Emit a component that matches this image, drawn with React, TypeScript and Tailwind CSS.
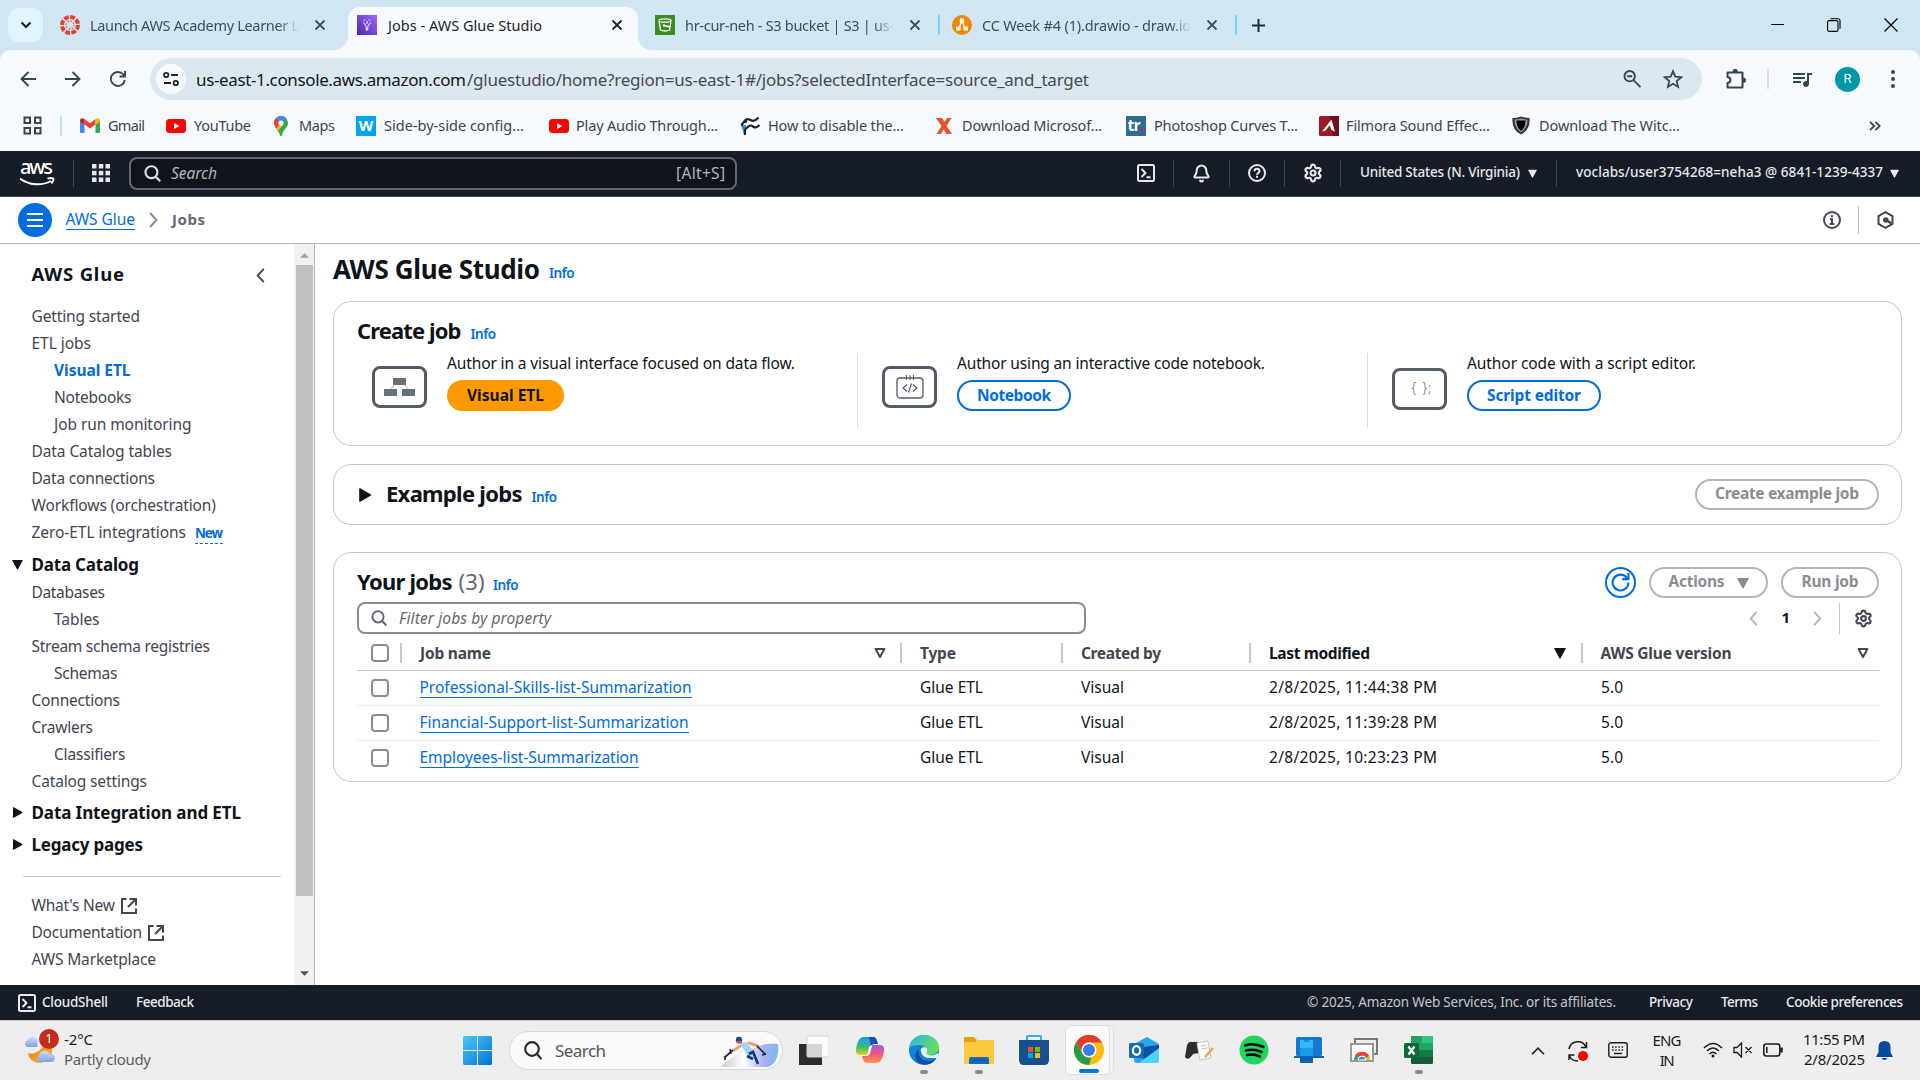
import React, { useLayoutEffect, useRef, useState } from 'react';
import { Settings, Bell } from 'lucide-react';
import { MdQueueMusic } from 'react-icons/md';

/** A single line of text, tracked so that it spans the given width. */
function T({ w, className = '', children }: { w: number; className?: string; children: string }) {
  const ref = useRef<HTMLSpanElement>(null);
  const [ls, setLs] = useState(0);
  useLayoutEffect(() => {
    const el = ref.current;
    if (!el) return;
    setLs((w - el.getBoundingClientRect().width) / Math.max(children.length - 1, 1));
  }, []);
  return (
    <span className={`block shrink-0 whitespace-nowrap ${className}`} style={{ width: w }}>
      <span ref={ref} style={{ letterSpacing: ls }}>{children}</span>
    </span>
  );
}

type P = { className?: string };

const Close = ({ className = '' }: P) => (
  <svg viewBox="0 0 12 12" className={`size-3 shrink-0 ${className}`} stroke="currentColor" strokeWidth="1.8" fill="none"><path d="M1.5 1.5l9 9M10.5 1.5l-9 9" /></svg>
);
const SearchIcon = ({ className = '' }: P) => (
  <svg viewBox="0 0 16 16" className={`shrink-0 ${className}`} stroke="currentColor" strokeWidth="2" fill="none"><circle cx="7" cy="6.8" r="5.6" /><path d="M11 11l4.3 4.3" /></svg>
);
const Terminal = ({ className = '' }: P) => (
  <svg viewBox="0 0 18 18" className={`size-[18px] shrink-0 ${className}`} stroke="currentColor" strokeWidth="2" fill="none" strokeLinejoin="round"><rect x="1" y="1" width="16" height="16" rx="1.5" /><path d="M4.5 5l4 4-4 4M9.5 13.2h4" /></svg>
);
const Down = ({ className = '' }: P) => (
  <svg viewBox="0 0 12 12" className={`shrink-0 ${className}`} fill="currentColor"><path d="M0.8 1h10.4q.9 0 .4.9L6.7 11q-.7 1-1.4 0L.4 1.9Q0 1 .8 1z" /></svg>
);
const Right = ({ className = '' }: P) => (
  <svg viewBox="0 0 12 12" className={`shrink-0 ${className}`} fill="currentColor"><path d="M1 0.8v10.4q0 .9.9.5l8.900-5q.9-.7 0-1.4L1.9.3Q1 0 1 .8z" /></svg>
);
const DownOutline = ({ className = '' }: P) => (
  <svg viewBox="0 0 12 12" className={`size-3 shrink-0 ${className}`} fill="none" stroke="#424650" strokeWidth="2" strokeLinejoin="round"><path d="M1.6 2h8.8L6 10z" /></svg>
);
const External = ({ className = '' }: P) => (
  <svg viewBox="0 0 16 16" className={`size-4 shrink-0 ${className}`} fill="none" stroke="#424650" strokeWidth="2"><path d="M5.5 1H1v14h14v-4.5M8.5 1H15v6.5M14.5 1.500L7 9" /></svg>
);
const Chevron = ({ className = '' }: P) => (
  <svg viewBox="0 0 9 16" className={`h-4 w-[9px] shrink-0 ${className}`} fill="none" stroke="currentColor" strokeWidth="2"><path d="M1 1l6.500 7L1 15" /></svg>
);
const YouTube = ({ className = '' }: P) => (
  <svg viewBox="0 0 20 14" className={`h-[14px] w-5 shrink-0 ${className}`}><rect width="20" height="14" rx="3.500" fill="#f00" /><path d="M8 4l5.500 3L8 10z" fill="#fff" /></svg>
);
const VRule = ({ className = '' }: P) => <i className={`h-[27px] w-px shrink-0 bg-[#424650] ${className}`} />;

const tabText = 'ml-[10px] pt-px text-[14.500px] [mask-image:linear-gradient(to_right,black_90%,transparent_100%)]';

function Tabs() {
  return (
    <div className="flex h-[50px] bg-[#f6fafe]">
      <div className="flex w-[348px] shrink-0 items-center rounded-br-[14px] bg-[#d1e6f3] text-[#3c4f5a]">
        <div className="ml-2 flex h-[34px] w-[35px] items-center justify-center rounded-[11px] bg-[#e1f4ff]">
          <svg viewBox="0 0 12 8" className="h-2 w-3" fill="none" stroke="#10181d" strokeWidth="2.200"><path d="M1.500 1.500L6 6l4.500-4.500" /></svg>
        </div>
        <svg viewBox="0 0 20 20" className="ml-[17px] size-5">
          <circle cx="10" cy="10" r="8" fill="none" stroke="#e83e2f" strokeWidth="4" strokeDasharray="4.700 1.583" />
          <circle cx="10" cy="10" r="4" fill="none" stroke="#e83e2f" strokeWidth="1.400" strokeDasharray="1.200 1.940" />
        </svg>
        <T w={209} className={tabText}>Launch AWS Academy Learner L</T>
        <Close className="ml-[15px]" />
      </div>
      <div className="w-[290px] shrink-0 bg-[#d1e6f3]">
        <div className="mt-[7px] flex h-[43px] items-center rounded-t-[12px] bg-[#f6fafe] pb-[7px] text-[#1c2529]">
          <svg viewBox="0 0 20 20" className="ml-[9px] size-5">
            <defs><linearGradient id="gl" x1="0" y1="1" x2="1" y2="0"><stop stopColor="#4d27aa" /><stop offset="1" stopColor="#a166ff" /></linearGradient></defs>
            <rect width="20" height="20" fill="url(#gl)" />
            <path d="M6.500 7.500l2.700 4V15h1.600v-3.500l2.700-4M8 4.500v1M12 4.500v1M10 6v3M6.500 5.500v.5M13.500 5.500v.5" stroke="#fff" strokeWidth="1" fill="none" />
          </svg>
          <T w={154} className="ml-[11px] pt-px text-[14.500px]">Jobs - AWS Glue Studio</T>
          <Close className="ml-[69px]" />
        </div>
      </div>
      <div className="flex min-w-0 flex-1 items-center rounded-bl-[14px] bg-[#d1e6f3] text-[#3c4f5a]">
        <svg viewBox="0 0 20 20" className="ml-[17px] size-5 shrink-0">
          <rect width="20" height="20" fill="#3c8c23" /><path d="M4 5.500l1.500 9.500q4.500 2 9 0L16 5.500" fill="none" stroke="#fff" strokeWidth="1.300" /><ellipse cx="10" cy="5.500" rx="6" ry="1.700" fill="none" stroke="#fff" strokeWidth="1.200" /><path d="M9 10.500l6 1.500" stroke="#fff" strokeWidth="1.300" /><circle cx="9" cy="10.500" r="1.200" fill="#fff" />
        </svg>
        <T w={209} className={tabText}>hr-cur-neh - S3 bucket | S3 | us-</T>
        <Close className="ml-[15px]" />
        <i className="ml-[17px] h-5 w-[2px] bg-[#7fd0fa]" />
        <svg viewBox="0 0 20 20" className="ml-3 size-5 shrink-0">
          <circle cx="10" cy="10" r="10" fill="#f08705" /><path d="M10 6l-3.500 8M10 6l3.500 8" stroke="#fff" strokeWidth="1.300" /><rect x="7.800" y="3.500" width="4.400" height="4.200" rx=".6" fill="#fff" /><rect x="4" y="11.500" width="4.600" height="4" rx=".6" fill="#fff" /><rect x="11.400" y="11.500" width="4.600" height="4" rx=".6" fill="#fff" />
        </svg>
        <T w={209} className={tabText}>CC Week #4 (1).drawio - draw.io</T>
        <Close className="ml-[15px]" />
        <i className="ml-[17px] h-5 w-[2px] bg-[#7fd0fa]" />
        <svg viewBox="0 0 13 13" className="ml-[15px] size-[13px] shrink-0" stroke="#1c2f38" strokeWidth="2"><path d="M6.500 0v13M0 6.500h13" /></svg>
        <div className="ml-auto flex items-center text-black">
          <i className="h-px w-[13px] -translate-y-px bg-black" />
          <svg viewBox="0 0 14 14" className="ml-[43px] size-[14px]" fill="none" stroke="#000" strokeWidth="1.100"><rect x=".6" y="2.600" width="10.400" height="10.800" rx="1.500" /><path d="M3.500 .7h7.500q2 0 2 2v8" /></svg>
          <svg viewBox="0 0 14 14" className="mr-[22px] ml-[43px] size-[14px]" stroke="#000" strokeWidth="1.200"><path d="M.5.5l13 13M13.500.5l-13 13" /></svg>
        </div>
      </div>
    </div>
  );
}

function Toolbar() {
  return (
    <div className="flex h-[58px] items-center text-[#33474f]">
      <svg viewBox="0 0 16 16" className="ml-5 size-4" fill="none" stroke="currentColor" strokeWidth="1.900"><path d="M16 8H1.500M8.500 1L1.500 8l7 7" /></svg>
      <svg viewBox="0 0 16 16" className="ml-[29px] size-4" fill="none" stroke="currentColor" strokeWidth="1.900"><path d="M0 8h14.500M7.500 1l7 7-7 7" /></svg>
      <svg viewBox="0 0 16 16" className="ml-[29px] size-4" fill="none" stroke="currentColor" strokeWidth="1.900"><path d="M14.800 9A7 7 0 1 1 13 3.200l1.800 2M15 0v5.500H9.500" /></svg>
      <div className="ml-[24px] flex h-[42px] w-[1552px] shrink-0 items-center rounded-full bg-[#dce8f0]">
        <div className="ml-[6px] flex size-[30px] items-center justify-center rounded-full bg-[#f6fafe]">
          <svg viewBox="0 0 16 16" className="size-4" fill="none" stroke="#1c2529" strokeWidth="1.800"><circle cx="3.200" cy="4" r="2.200" /><path d="M8 4h7M1 12h7" /><circle cx="12.800" cy="12" r="2.200" /></svg>
        </div>
        <T w={270} className="ml-[10px] pt-px text-[17px] text-[#10181c]">us-east-1.console.aws.amazon.com</T>
        <T w={622} className="ml-px pt-px text-[17px] text-[#454c50]">/gluestudio/home?region=us-east-1#/jobs?selectedInterface=source_and_target</T>
        <svg viewBox="0 0 18 18" className="ml-[534px] size-[18px]" fill="none" stroke="#3d4549" strokeWidth="1.900"><circle cx="6.700" cy="6.200" r="5.200" /><path d="M10.500 10.200l7 7M4.200 6.200h5" /></svg>
        <svg viewBox="0 0 20 20" className="ml-[22px] size-5" fill="none" stroke="#3d4549" strokeWidth="1.800"><path d="M10 2.200l2.300 5.500 6 .5-4.600 3.900 1.400 5.800L10 14.800l-5.100 3.100 1.400-5.800L1.700 8.200l6-.5z" /></svg>
      </div>
      <svg viewBox="0 0 22 22" className="ml-[23px] size-[22px] shrink-0" fill="none" stroke="currentColor" strokeWidth="2" strokeLinejoin="round"><path d="M2.500 4.500h15v15h-15v-4.500q3-.5 3-3t-3-3z" /><path d="M8 3.500a2.200 2.200 0 0 1 4.400 0zM18.500 10a2.200 2.200 0 0 1 0 4.400z" fill="currentColor" strokeWidth="1" /></svg>
      <i className="ml-[20px] h-5 w-[2px] bg-[#c0e6fb]" />
      <MdQueueMusic className="ml-[21px] size-[24px]" />
      <div className="ml-[21px] flex size-[25px] items-center justify-center rounded-full bg-[#0097a7] font-[Roboto] text-[13px] text-white">R</div>
      <svg viewBox="0 0 4 18" className="ml-[31px] h-[18px] w-1" fill="currentColor"><circle cx="2" cy="2" r="2" /><circle cx="2" cy="9" r="2" /><circle cx="2" cy="16" r="2" /></svg>
    </div>
  );
}

function Bookmarks() {
  const t = 'text-[14.500px]';
  return (
    <div className="flex h-[43px] items-center pb-[8px] text-[#3d4448]">
      <svg viewBox="0 0 19 19" className="ml-[23px] size-[19px]" fill="none" stroke="#3d4448" strokeWidth="2"><path d="M1.500 1.500h5.500v5.500H1.500zM12 1.500h5.500v5.500H12zM1.500 12h5.500v5.500H1.500zM12 12h5.500v5.500H12z" /></svg>
      <i className="ml-[18px] h-5 w-[2px] bg-[#b7e3fb]" />
      <svg viewBox="0 0 20 15" className="ml-[18px] h-[15px] w-5"><path d="M0 2v11.500q0 1.500 1.500 1.500H4.500V6z" fill="#4285f4" /><path d="M15.500 6v9h3q1.500 0 1.500-1.500V2z" fill="#34a853" /><path d="M4.500 1v5.500L10 10.500l5.500-4V1L10 5.200z" fill="#ea4335" /><path d="M0 2.200Q.5-1 4.500 1v6L0 3.500z" fill="#c5221f" /><path d="M20 2.200Q19.500-1 15.500 1v6L20 3.500z" fill="#fbbc04" /></svg>
      <T w={37} className={`ml-[8px] ${t}`}>Gmail</T>
      <YouTube className="ml-[21px]" />
      <T w={57} className={`ml-2 ${t}`}>YouTube</T>
      <svg viewBox="0 0 14 20" className="ml-[23px] h-5 w-[14px]"><path d="M7 0a7 7 0 0 1 7 7c0 5-5 6-6 12.500-.3.700-1.700.7-2 0C5 14 0 12 0 7a7 7 0 0 1 7-7z" fill="#34a853" /><path d="M2 2.200A7 7 0 0 1 12 2.200L7 7z" fill="#4285f4" /><path d="M2 2.200L7 7l-4.500 5.500C0 9 -1 5.500 2 2.200z" fill="#ea4335" /><path d="M2.500 12.500L9 5v4l-5 6z" fill="#fbbc04" /><circle cx="7" cy="7" r="2.600" fill="#f6fafe" /></svg>
      <T w={36} className={`ml-[11px] ${t}`}>Maps</T>
      <div className="ml-[21px] flex size-5 items-center justify-center bg-[#00a4ef] font-['Open_Sans'] text-[15px] font-bold text-white">W</div>
      <T w={140} className={`ml-2 ${t}`}>Side-by-side config...</T>
      <YouTube className="ml-[25px]" />
      <T w={142} className={`ml-[7px] ${t}`}>Play Audio Through...</T>
      <svg viewBox="0 0 20 20" className="ml-[22px] size-5" fill="none"><path d="M1 9c1 3 2 6 3.500 10L6 9z" fill="#2d8fd5" /><path d="M4 5.500c2-3 4-3 6.500-1.500s5 1 8-2.500M7 12c2-3 4-3 6-1.500s4.500 1 6.500-1.500M1.500 9.500C3 6 4.500 5 7 6M5 19c-.5-4 0-7 3-8" stroke="#222" strokeWidth="2.200" /></svg>
      <T w={136} className={`ml-2 ${t}`}>How to disable the...</T>
      <svg viewBox="0 0 16 16" className="ml-[32px] size-4"><path d="M0 0h6L8.500 4 11 0h4.500l-5 8 5.500 8h-5.500L7.500 11.500 5 16H.5l5-8z" fill="#e8512a" /></svg>
      <T w={140} className={`ml-[10px] ${t}`}>Download Microsof...</T>
      <div className="ml-[24px] flex size-5 items-center justify-center bg-[#2e6b93] pb-[2px] font-['Open_Sans'] text-[16px] font-bold text-white"><span className="tracking-tighter">tr</span><span className="text-[#e6007e]">.</span></div>
      <T w={144} className={`ml-2 ${t}`}>Photoshop Curves T...</T>
      <svg viewBox="0 0 20 20" className="ml-[21px] size-5"><rect width="20" height="20" rx="1.500" fill="#9a1c25" /><path d="M10 0h10v20H14z" fill="#6f0f18" /><path d="M3 15.500L12.500 3.500 16 16l-4-2.500-1-4.500-4.500 5.500z" fill="#fff" /></svg>
      <T w={144} className={`ml-[7px] ${t}`}>Filmora Sound Effec...</T>
      <svg viewBox="0 0 18 19" className="ml-[22px] h-[19px] w-[18px]"><path d="M9 .5q5 1.500 8.500 1.500 1 12-8.500 16.500Q-.5 14 .5 2 5 2 9 .5z" fill="#333" /><path d="M9 2.500q4 1 6.500 1 0 9-6.500 13Q2.500 12.500 2.500 3.500 6 3.500 9 2.500z" fill="#999" /><path d="M9 4.500h4.500q0 7-4.500 10.500Q4.500 11.500 4.500 4.500z" fill="#000" /></svg>
      <T w={141} className={`ml-[9px] ${t}`}>Download The Witc...</T>
      <svg viewBox="0 0 12 10" className="ml-[189px] h-[10px] w-3" fill="none" stroke="currentColor" strokeWidth="1.800"><path d="M1 .8L5.200 5 1 9.200M6.500 .8L10.700 5l-4.200 4.200" /></svg>
    </div>
  );
}

function AwsHeader() {
  return (
    <div className="flex h-[46px] items-center border-b border-[#424650] bg-[#161d26] pb-[1px] text-[#e8e8ec]">
      <div className="ml-5 flex w-[35px] flex-col pt-px">
        <T w={33} className="h-[17px] text-[20px] leading-[12px] font-medium text-white">aws</T>
        <svg viewBox="0 0 35 9" className="-mt-px h-[9px] w-[35px]" fill="none" stroke="#fff" strokeWidth="2"><path d="M0 1.500C9 8.500 22 9 31 4M27.500 1.500q6-1 6 .5t-2 4.500" /></svg>
      </div>
      <VRule className="ml-[18px]" />
      <svg viewBox="0 0 18 18" className="ml-[18px] size-[18px] shrink-0" fill="currentColor">
        {[0, 6.8, 13.5].map((y) => [0, 6.8, 13.5].map((x) => <rect key={`${x}-${y}`} x={x} y={y} width="4.500" height="4.500" />))}
      </svg>
      <div className="ml-[19px] flex h-[33px] w-[608px] shrink-0 items-center rounded-[8px] border-2 border-[#656871] bg-[#0f141a] text-[#b4b4bb]">
        <SearchIcon className="ml-[13px] size-[17px] text-[#dedee3]" />
        <T w={46} className="mt-px ml-[10px] text-[15.500px] italic">Search</T>
        <T w={49} className="mt-px ml-[459px] text-[15.500px]">[Alt+S]</T>
      </div>
      <Terminal className="ml-[400px]" />
      <VRule className="ml-[18px]" />
      <Bell className="ml-[18px] size-[19px]" strokeWidth={2.6} />
      <VRule className="ml-[18px]" />
      <svg viewBox="0 0 18 18" className="ml-[18px] size-[18px] shrink-0" fill="none" stroke="currentColor" strokeWidth="2"><circle cx="9" cy="9" r="8" /><path d="M6.500 7.200C6.500 4 11.500 4 11.500 7c0 1.600-2.500 1.800-2.500 3.800M9 11.800v1.900" /></svg>
      <VRule className="ml-[18px]" />
      <Settings className="ml-[18px] size-[20px]" strokeWidth={2.6} />
      <VRule className="ml-[17px]" />
      <T w={160} className="-mt-[2px] ml-[19px] text-[13.500px] font-medium">United States (N. Virginia)</T>
      <Down className="ml-[8px] size-[9px]" />
      <VRule className="ml-[19px]" />
      <T w={307} className="-mt-[2px] ml-[19px] text-[13.500px] font-medium">voclabs/user3754268=neha3 @ 6841-1239-4337</T>
      <Down className="ml-[7px] size-[9px]" />
    </div>
  );
}

function Breadcrumbs() {
  return (
    <div className="flex h-[47px] items-center border-b border-[#b4b4bb] bg-white">
      <div className="ml-[18px] flex size-[34px] items-center justify-center rounded-full bg-[#006ce0]">
        <svg viewBox="0 0 16 14" className="h-[14px] w-4" stroke="#fff" strokeWidth="2"><path d="M0 1h16M0 7h16M0 13h16" /></svg>
      </div>
      <T w={69.5} className="ml-[13.500px] border-b border-[#006ce0] text-[15.500px] leading-[19px] text-[#006ce0]">AWS Glue</T>
      <Chevron className="ml-[14px] text-[#8c8c94]" />
      <T w={33} className="-mt-[2px] ml-[14px] text-[15px] font-bold text-[#656871]">Jobs</T>
      <svg viewBox="0 0 18 18" className="ml-auto size-[18px]" fill="none" stroke="#424650" strokeWidth="2"><circle cx="9" cy="9" r="8" /><path d="M9 4.200v2M7 8.200h2V13M6.800 13h4.400" /></svg>
      <i className="ml-[17px] h-7 w-px bg-[#b4b4bb]" />
      <svg viewBox="0 0 17 18" className="mr-[26px] ml-[18px] h-[18px] w-[17px]" fill="none" stroke="#424650" strokeWidth="2"><path d="M8.500 1.200l7 4v7.600l-7 4-7-4V5.200z" /><path d="M9 9l5.500 3.500" strokeWidth="2.500" /><circle cx="8.800" cy="9" r="1.800" fill="#424650" /></svg>
    </div>
  );
}

function Item({ w, children, sub, active, ext }: { w: number; children: string; sub?: boolean; active?: boolean; ext?: boolean }) {
  return (
    <div className={`flex h-[27px] items-center ${sub ? 'pl-[54px]' : 'pl-[31.500px]'}`}>
      <T w={w + 0.5} className={active ? 'text-[15.500px] font-bold text-[#006ce0]' : 'text-[15.500px] text-[#424650]'}>{children}</T>
      {ext && <External className="ml-[6px]" />}
    </div>
  );
}

function Section({ w, children, open }: { w: number; children: string; open?: boolean }) {
  return (
    <div className="flex items-center pl-[11.500px] text-[#0f141a]">
      {open ? <Down className="mr-[9px] size-[11px]" /> : <Right className="mr-[9px] size-[11px]" />}
      <T w={w + 0.5} className="text-[17px] font-bold">{children}</T>
    </div>
  );
}

function Sidebar() {
  return (
    <div className="flex w-[315px] shrink-0 border-r border-[#b4b4bb]">
      <div className="flex w-[294px] flex-col">
        <div className="flex items-center pt-[17px] pl-[31.500px] text-[#0f141a]">
          <T w={92.5} className="text-[18.500px] leading-[26px] font-bold">AWS Glue</T>
          <Chevron className="mt-[2px] ml-[132px] h-[15px] rotate-180 text-[#424650]" />
        </div>
        <div className="mt-[16px]">
          <Item w={108}>Getting started</Item>
          <Item w={59}>ETL jobs</Item>
          <Item w={76} sub active>Visual ETL</Item>
          <Item w={77} sub>Notebooks</Item>
          <Item w={137} sub>Job run monitoring</Item>
          <Item w={140}>Data Catalog tables</Item>
          <Item w={123}>Data connections</Item>
          <Item w={184}>Workflows (orchestration)</Item>
          <div className="flex h-[27px] items-center">
            <Item w={154}>Zero-ETL integrations</Item>
            <T w={28} className="ml-[9px] border-b border-dashed border-[#006ce0] pt-[2px] text-[13.500px] leading-[19px] font-bold text-[#006ce0]">New</T>
          </div>
        </div>
        <div className="flex h-[33px] flex-col justify-end pb-[2px]"><Section w={107} open>Data Catalog</Section></div>
        <div>
          <Item w={73}>Databases</Item>
          <Item w={45} sub>Tables</Item>
          <Item w={178}>Stream schema registries</Item>
          <Item w={63} sub>Schemas</Item>
          <Item w={88}>Connections</Item>
          <Item w={61}>Crawlers</Item>
          <Item w={71} sub>Classifiers</Item>
          <Item w={115}>Catalog settings</Item>
        </div>
        <div className="mt-[5px] flex flex-col gap-[6.500px]">
          <Section w={209}>Data Integration and ETL</Section>
          <Section w={111}>Legacy pages</Section>
        </div>
        <i className="mt-[18.500px] ml-[23px] block h-px w-[258px] bg-[#c6c6cd]" />
        <div className="mt-[15px]">
          <Item w={83} ext>What's New</Item>
          <Item w={110} ext>Documentation</Item>
          <Item w={124}>AWS Marketplace</Item>
        </div>
      </div>
      <div className="flex w-5 flex-col items-center bg-[#f1f1f1] pl-[1px]">
        <svg viewBox="0 0 10 5" className="mt-[9px] h-[5px] w-[9px] shrink-0" fill="#a3a3a3"><path d="M5 0l5 5H0z" /></svg>
        <i className="mt-[7px] h-[631px] w-[17px] shrink-0 bg-[#c1c1c1]" />
        <svg viewBox="0 0 10 5" className="mt-auto mb-[9px] h-[5px] w-[9px] shrink-0" fill="#505050"><path d="M5 5L0 0h10z" /></svg>
      </div>
    </div>
  );
}

const Info = ({ className = '' }: P) => <T w={25.5} className={`text-[13.500px] font-semibold text-[#006ce0] ${className}`}>Info</T>;

const card = 'rounded-[18px] border border-[#c6c6cd] bg-white';
const pill = 'flex h-[31px] shrink-0 items-center justify-center rounded-full border-2 text-[15.500px] font-bold';
const iconBox = 'flex h-[42px] w-[55px] shrink-0 items-center justify-center rounded-[8px] border-[3px] border-[#545b64]';
const lead = 'text-[15.500px] leading-[20px] text-[#0f141a]';

function CreateJob() {
  return (
    <div className={`${card} h-[145px] px-[23px] pt-[13px]`}>
      <div className="flex items-baseline leading-[30px] text-[#0f141a]">
        <T w={104.5} className="text-[22px] font-bold">Create job</T>
        <Info className="ml-[9px]" />
      </div>
      <div className="mt-[4px] flex h-[75px] items-start">
        <div className="flex w-[501px] shrink-0 self-stretch border-r border-[#dedee3] pl-[15px]">
          <div className={`${iconBox} mt-[13px]`}>
            <svg viewBox="0 0 31 19" className="h-[19px] w-[31px]"><path d="M12 5L6 12M19 5l6 7" stroke="#aab2ba" /><path d="M9 0h13v7H9zM0 11h13v7H0zM18 11h13v7H18z" fill="#687078" /></svg>
          </div>
          <div className="ml-[20px]">
            <T w={348} className={lead}>Author in a visual interface focused on data flow.</T>
            <div className={`${pill} mt-[7px] w-[117px] border-[#ff9900] bg-[#ff9900] text-[#0f141a]`}><T w={77}>Visual ETL</T></div>
          </div>
        </div>
        <div className="flex w-[510px] shrink-0 self-stretch border-r border-[#dedee3] pl-6">
          <div className={`${iconBox} mt-[13px]`}>
            <svg viewBox="0 0 28 24" className="-mt-px h-6 w-7" fill="none" stroke="#545b64"><rect x="1" y="3" width="26" height="20" rx="3" strokeWidth="1.300" /><path d="M10.500 0v5M14 0v5M17.500 0v5" /><path d="M11 9.500L7 13l4 3.500M17 9.500l4 3.500-4 3.500M15.500 8.500l-3 9" strokeWidth="1.200" /></svg>
          </div>
          <div className="ml-[20px]">
            <T w={308} className={lead}>Author using an interactive code notebook.</T>
            <div className={`${pill} mt-[7px] w-[114px] border-[#006ce0] text-[#006ce0]`}><T w={74}>Notebook</T></div>
          </div>
        </div>
        <div className="flex pl-6">
          <div className={`${iconBox} mt-[15px] pb-[3px] pl-[5px] font-['Open_Sans'] text-[14px] font-light tracking-[1px] text-[#545b64]`}>{'{ };'}</div>
          <div className="ml-[20px]">
            <T w={229} className={lead}>Author code with a script editor.</T>
            <div className={`${pill} mt-[7px] w-[134px] border-[#006ce0] text-[#006ce0]`}><T w={94}>Script editor</T></div>
          </div>
        </div>
      </div>
    </div>
  );
}

function ExampleJobs() {
  return (
    <div className={`${card} mt-[18px] flex h-[61px] items-center pr-[22px] pl-[24px]`}>
      <Right className="size-[14px] text-[#0f141a]" />
      <div className="-mt-[2px] ml-[14px] flex items-baseline text-[#0f141a]">
        <T w={136.5} className="text-[22px] font-bold">Example jobs</T>
        <Info className="ml-[9px]" />
      </div>
      <div className={`${pill} ml-auto w-[184px] border-[#b4b4bb] pb-[2px] text-[#8c8c94]`}><T w={144}>Create example job</T></div>
    </div>
  );
}

const Check = ({ className = '' }: P) => <i className={`size-[18px] rounded-[4px] border-2 border-[#8c8c94] ${className}`} />;
const cols = 'grid grid-cols-[43px_500px_161px_188px_332px_298px] items-center';
const Sep = () => <i className="h-5 w-[2px] shrink-0 bg-[#c6c6cd]" />;

function Row({ name, nw, date, last }: { name: string; nw: number; date: string; last?: boolean }) {
  return (
    <div className={`${cols} text-[15.500px] text-[#0f141a] ${last ? 'h-[33px]' : 'h-[35px] border-b border-[#ebebf0] pb-px'}`}>
      <Check className="ml-[14px]" />
      <T w={nw} className="ml-[19.500px] border-b border-[#006ce0] leading-[19px] text-[#006ce0]">{name}</T>
      <T w={63} className="ml-[20px]">Glue ETL</T>
      <T w={43} className="ml-[20px]">Visual</T>
      <T w={168} className="ml-[20px]">{date}</T>
      <T w={22} className="ml-[20px]">5.0</T>
    </div>
  );
}

function YourJobs() {
  return (
    <div className={`${card} mt-[27px] h-[230px] pr-[22px] pl-[23px]`}>
      <div className="mt-[14px] flex h-[31px] items-center">
        <div className="-mt-[2px] flex items-baseline">
          <T w={95.5} className="text-[22px] font-bold text-[#0f141a]">Your jobs</T>
          <T w={26} className="ml-[6px] text-[22px] text-[#656871]">(3)</T>
          <Info className="ml-[8.500px]" />
        </div>
        <div className="ml-auto flex size-[31px] items-center justify-center rounded-full border-2 border-[#006ce0]">
          <svg viewBox="0 0 18 18" className="size-[19px]" fill="none" stroke="#006ce0" strokeWidth="2"><path d="M16.500 9a7.500 7.500 0 1 1-1.300-4.200M16.500 0v5.800h-6" /></svg>
        </div>
        <div className={`${pill} ml-[13px] w-[119px] border-[#b4b4bb] text-[#8c8c94]`}><T w={56} className="-mt-[2px]">Actions</T><Down className="ml-[12px] size-3" /></div>
        <div className={`${pill} ml-[13px] w-[98px] border-[#b4b4bb] pb-[2px] text-[#8c8c94]`}><T w={57}>Run job</T></div>
      </div>
      <div className="mt-[4px] flex h-[32px] items-center">
        <div className="flex h-[32px] w-[729px] items-center rounded-[8px] border-2 border-[#8c8c94]">
          <SearchIcon className="ml-[12px] size-4 text-[#656871]" />
          <T w={152} className="mt-[2px] ml-[12px] text-[15.500px] text-[#656871] italic">Filter jobs by property</T>
        </div>
        <Chevron className="ml-auto h-[15px] rotate-180 text-[#b4b4bb]" />
        <span className="-mt-px ml-[23px] text-[15px] font-bold text-[#0f141a]">1</span>
        <Chevron className="ml-[23px] h-[15px] text-[#b4b4bb]" />
        <i className="ml-[17px] h-[31px] w-px bg-[#c6c6cd]" />
        <Settings className="mr-[6px] ml-[14px] size-[19px] text-[#424650]" strokeWidth={2.6} />
      </div>
      <div className={`${cols} h-[37px] border-b border-[#c6c6cd] pt-[2px] text-[15.500px] font-bold text-[#424650]`}>
        <Check className="ml-[14px]" />
        <div className="flex items-center"><Sep /><T w={71} className="ml-[18px] pt-[2px]">Job name</T><DownOutline className="mr-[14px] ml-auto" /></div>
        <div className="flex items-center"><Sep /><T w={36} className="ml-[18px] pt-[2px]">Type</T></div>
        <div className="flex items-center"><Sep /><T w={80} className="ml-[18px] pt-[2px]">Created by</T></div>
        <div className="flex items-center"><Sep /><T w={101} className="ml-[18px] pt-[2px] text-[#0f141a]">Last modified</T><Down className="mr-[15px] ml-auto size-3 text-[#0f141a]" /></div>
        <div className="flex items-center"><Sep /><T w={131} className="ml-[17.500px] pt-[2px]">AWS Glue version</T><DownOutline className="mr-[10px] ml-auto" /></div>
      </div>
      <Row name="Professional-Skills-list-Summarization" nw={272} date="2/8/2025, 11:44:38 PM" />
      <Row name="Financial-Support-list-Summarization" nw={269} date="2/8/2025, 11:39:28 PM" />
      <Row name="Employees-list-Summarization" nw={219} date="2/8/2025, 10:23:23 PM" last />
    </div>
  );
}

function AwsFooter() {
  return (
    <div className="flex h-[35px] items-center bg-[#161d26] text-[13.500px] font-medium text-[#ebebf0]">
      <Terminal className="ml-[18px]" />
      <T w={66} className="ml-[6px]">CloudShell</T>
      <T w={58} className="ml-[28px]">Feedback</T>
      <T w={309} className="ml-auto font-normal text-[#c6c6cd]">© 2025, Amazon Web Services, Inc. or its affiliates.</T>
      <T w={44} className="ml-[33px]">Privacy</T>
      <T w={37} className="ml-[28px]">Terms</T>
      <T w={117} className="mr-[17px] ml-[28px]">Cookie preferences</T>
    </div>
  );
}

function TaskIcon({ children, dot, ml }: { children: React.ReactNode; dot?: boolean; ml: string }) {
  return (
    <div className={`flex h-[60px] w-[30px] shrink-0 flex-col items-center pt-[14px] ${ml}`}>
      <svg viewBox="0 0 30 30" className="size-[30px]">{children}</svg>
      {dot && <i className="mt-[5px] h-1 w-2 rounded-full bg-[#8a8a8a]" />}
    </div>
  );
}

function Taskbar() {
  return (
    <div className="flex h-[60px] items-center border-t border-[#c8c8c8] bg-[#eeeeee] text-[#1b1b1b]">
      <div className="relative -mt-[7px] ml-[24px] size-[36px] shrink-0">
        <svg viewBox="0 0 36 36" className="size-9">
          <defs>
            <linearGradient id="cl" x1="0" y1="0" x2="0" y2="1"><stop stopColor="#cfe0f8" /><stop offset="1" stopColor="#7ba4e6" /></linearGradient>
            <linearGradient id="mo" x1="0" y1="0" x2="1" y2="1"><stop stopColor="#e8750f" /><stop offset="1" stopColor="#fbb832" /></linearGradient>
          </defs>
          <path d="M4 24c5 2 15-1 17-13 6 3 9 8 6 16-6 10-21 9-23-3z" fill="url(#mo)" />
          <path d="M3 18a3.500 3.500 0 0 1 .5-6.500 5.500 5.500 0 0 1 10-1V18z" fill="url(#cl)" />
          <path d="M15 33a3.500 3.500 0 0 1 0-6.500 5.500 5.500 0 0 1 10.500-1.500 4 4 0 0 1 2.500 8z" fill="url(#cl)" />
        </svg>
        <span className="absolute top-0 left-[15px] flex size-5 items-center justify-center rounded-full bg-[#c42b1c] text-[13px] text-white">1</span>
      </div>
      <div className="-mt-[3px] ml-[4px] text-[15px] leading-[20px]">
        <T w={29}>-2°C</T>
        <T w={87} className="text-[#5f5f5f]">Partly cloudy</T>
      </div>
      <svg viewBox="0 0 29 29" className="ml-[312px] size-[29px] shrink-0">
        <defs><linearGradient id="wn" x1="0" y1="0" x2="1" y2="1"><stop stopColor="#4cc8fb" /><stop offset="1" stopColor="#0072d0" /></linearGradient></defs>
        <path d="M1 0h13v14H0V1zM15 0h13l1 1v13H15zM0 15h14v14H1l-1-1zM15 15h14v13l-1 1H15z" fill="url(#wn)" />
      </svg>
      <div className="-mt-px ml-[17px] flex h-[39px] w-[274px] shrink-0 items-center overflow-hidden rounded-full border border-[#d8d8d8] bg-[#fafafa]">
        <svg viewBox="0 0 18 19" className="ml-[14px] h-[19px] w-[18px]" fill="none" stroke="#2b2b2b" strokeWidth="2.200"><circle cx="8" cy="8" r="6.800" /><path d="M12.500 12.500l5 5.500" /></svg>
        <T w={51} className="mt-px ml-[13px] text-[17px] text-[#555]">Search</T>
        <svg viewBox="0 0 58 32" className="mt-[3px] ml-[115px] h-[32px] w-[58px]">
          <defs><linearGradient id="sn"><stop stopColor="#c9cdd4" /><stop offset=".4" stopColor="#fff" /><stop offset=".75" stopColor="#a9aff0" /><stop offset="1" stopColor="#7cb6f3" /></linearGradient></defs>
          <path d="M0 30C10 22 20 14 34 12c8-4 14-5 23-4 1 12-2 20-10 23H2z" fill="url(#sn)" />
          <path d="M23 8l-10 6M28 7l9 3" stroke="#f0a36e" strokeWidth="3" strokeLinecap="round" />
          <path d="M19 8l7-2 8 12-6 3z" fill="#9fd2fb" /><path d="M28 18l4-2 5 12M26 20l6 3" stroke="#123a78" strokeWidth="2.800" fill="none" />
          <circle cx="18" cy="4" r="3.200" fill="#1c4d8f" /><path d="M15.500 5h5.500v2.500h-5z" fill="#d8524a" />
          <path d="M12 14L3 22M36 10l8 8M9 13l1 5M4 20v4M41 19l4-1" stroke="#222b4a" strokeWidth="1.700" />
        </svg>
      </div>
      <TaskIcon ml="ml-[16px]"><path d="M0 9h23v21H0z" fill="#2d2d2d" /><rect x="8" y="1" width="22" height="21" rx="1" fill="#fff" fillOpacity=".8" stroke="#d5d5d5" /></TaskIcon>
      <TaskIcon ml="ml-[26px]">
        <defs><linearGradient id="ca" x1="0" y1="0" x2="0" y2="1"><stop stopColor="#1a9be8" /><stop offset=".6" stopColor="#3fbf6e" /><stop offset="1" stopColor="#f4d000" /></linearGradient><linearGradient id="cb" x1="0" y1="0" x2="0" y2="1"><stop stopColor="#a259f0" /><stop offset=".5" stopColor="#f2547d" /><stop offset="1" stopColor="#ff9a4d" /></linearGradient></defs>
        <path d="M8 2h10q3 0 4 4l1 3h-4q-3 0-4 4l-2 7H5q-4 0-4-4c0-4 2-14 7-14z" fill="url(#ca)" />
        <path d="M14 2h4q3 0 4 4l1 3h-4q-2 0-3 2z" fill="#1450c8" />
        <path d="M22 28H12q-3 0-4-4l-1-3h4q3 0 4-4l2-7h8q4 0 4 4c0 4-2 14-7 14z" fill="url(#cb)" />
        <path d="M14 12l3-2-2 9-3 2z" fill="#fff" />
      </TaskIcon>
      <TaskIcon ml="ml-[24px]" dot>
        <defs><linearGradient id="ea" x1="0" y1="0" x2="1" y2=".3"><stop stopColor="#2fb5f0" /><stop offset="1" stopColor="#63e05a" /></linearGradient></defs>
        <circle cx="15" cy="15" r="15" fill="#1283d8" />
        <path d="M0 13C1 5 7 0 15 0c9 0 15 6 15 12 0 5-4 8-9 8-4 0-3-2-3-4 0-3-3-6-8-6-4 0-8 1-10 3z" fill="url(#ea)" />
        <path d="M10 14c-2 9 6 15 17 10-5 7-13 7-18 3-4-4-3-10 1-13z" fill="#0f4fa0" />
        <path d="M18 13c-2-1-5-1-6 1-1 3 2 9 8 9h8c2-2 2-4 1-5-4 3-9 3-11 1-1-2 1-3 0-6z" fill="#eee" />
      </TaskIcon>
      <TaskIcon ml="ml-[25px]" dot><rect y="5" width="30" height="24" rx="1" fill="#fdc93c" /><path d="M0 3q0-1 1-1h9l3 3q-1 2-3 2H0z" fill="#e0a010" /><path d="M5 29v-5q0-2 2-2h16q2 0 2 2v5z" fill="#0f6cbd" /><path d="M9 25h12" stroke="#0a4a85" /></TaskIcon>
      <TaskIcon ml="ml-[25px]"><path d="M8 6V2q0-1 1-1h12q1 0 1 1v4" fill="none" stroke="#2bb2f0" strokeWidth="2" /><path d="M0 5h30v20q0 5-5 5H5q-5 0-5-5z" fill="#174f8f" /><path d="M9 12h5v5H9z" fill="#f25022" /><path d="M16 12h5v5h-5z" fill="#7fba00" /><path d="M9 18h5v5H9z" fill="#00a4ef" /><path d="M16 18h5v5h-5z" fill="#ffb900" /></TaskIcon>
      <div className="-mt-px ml-[16px] flex h-[50px] w-[49px] shrink-0 rounded-[6px] border border-[#e0e0e0] bg-[#f3f3f3]">
        <div className="flex w-[44px] flex-col items-center rounded-[6px] border-r border-[#e0e0e0] bg-[#fafafa] pt-[9px] pl-[3px]">
          <svg viewBox="0 0 30 30" className="size-[30px]"><circle cx="15" cy="15" r="15" fill="#fbbc04" /><path d="M2 7.500A15 15 0 0 1 28 7.500H15a7.500 7.500 0 0 0-6.500 11.200z" fill="#e33b2e" /><path d="M2 7.500l6.500 11.300q3 4.500 9 3.500L15 30A15 15 0 0 1 2 7.500z" fill="#289a46" /><circle cx="15" cy="15" r="7.500" fill="#fff" /><circle cx="15" cy="15" r="6" fill="#3b7ded" /></svg>
          <i className="mt-[4px] h-1 w-5 rounded-full bg-[#0078d4]" />
        </div>
      </div>
      <TaskIcon ml="ml-[15px]"><path d="M5 9L18 2l12 7v16q0 3-3 3H8q-3 0-3-3z" fill="#28a8ea" /><path d="M14 12l16-2v8L14 24z" fill="#0f4fa8" /><path d="M30 13v12q0 3-3 3H10z" fill="#4bd5fa" /><rect y="8" width="15" height="15" rx="1.500" fill="#0f6cbd" /><ellipse cx="7.500" cy="15.500" rx="3.600" ry="4.300" fill="none" stroke="#fff" strokeWidth="2.200" /></TaskIcon>
      <TaskIcon ml="ml-[25px]"><path d="M3 10q2-4 5-3h6q5 0 5 6l1 8q-3 2-5-3l-6 1c-3 5-6 6-8 3z" fill="#2d2d2d" /><path d="M13 8l11-2 3 17-11 2z" fill="#fff" stroke="#c8c8c8" /><path d="M17 11l5-1M18 14l5-1" stroke="#bbb" /><path d="M29 13l-8 9" stroke="#eda93a" strokeWidth="2.500" /></TaskIcon>
      <TaskIcon ml="ml-[25px]"><circle cx="15" cy="15" r="14.500" fill="#1ed760" /><path d="M6 10.500q9-3 18.500 1.500M7 15.500q8-2 15.500 1.500M8 20q7-1.500 13 1.500" stroke="#000" strokeWidth="2.600" fill="none" strokeLinecap="round" /></TaskIcon>
      <TaskIcon ml="ml-[25px]"><rect x="2" y="2" width="26" height="19" rx="1.500" fill="#1378cf" /><path d="M0 21h30v2H0z" fill="#1065b5" /><rect x="6" y="5" width="13" height="23" rx="1" fill="#35b8f2" /><path d="M6 13h13v8H6z" fill="#1d9be3" /><path d="M6 21h13v6q0 1-1 1H7q-1 0-1-1z" fill="#0b62b0" /><path d="M10 6h5" stroke="#0b62b0" /></TaskIcon>
      <TaskIcon ml="ml-[25px]"><rect x="6" y="4" width="22" height="15" fill="none" stroke="#777" strokeWidth="2" /><rect x="2" y="9" width="22" height="17" fill="#fff" stroke="#999" strokeWidth="2" /><path d="M5 25a8 8 0 0 1 16 0z" fill="#34a853" /><path d="M6 21a8 8 0 0 1 14 0l-7 1z" fill="#ea4335" /><path d="M15 25l5-4q1 2 1 4z" fill="#fbbc04" /><path d="M9 25a4 4 0 0 1 8 0z" fill="#4285f4" stroke="#fff" /></TaskIcon>
      <TaskIcon ml="ml-[25px]" dot><rect x="7" y="1" width="22" height="28" rx="1.500" fill="#185c37" /><path d="M7 8h11v7H7zM7 1h11v7H7z" fill="#21a366" /><path d="M18 1h11v7H18z" fill="#33c481" /><path d="M18 8h11v7H18z" fill="#21a366" /><path d="M7 15h22v7H7z" fill="#107c41" /><rect y="8" width="15" height="15" rx="1.500" fill="#0e6b38" /><path d="M4.500 11.500l6 8M10.500 11.500l-6 8" stroke="#fff" strokeWidth="2.200" /></TaskIcon>
      <svg viewBox="0 0 14 8" className="ml-[97px] h-2 w-[14px] shrink-0" fill="none" stroke="#1b1b1b" strokeWidth="1.600"><path d="M1 7.200l6-6 6 6" /></svg>
      <svg viewBox="0 0 20 24" className="ml-[23px] h-6 w-5 shrink-0" fill="none" stroke="#1b1b1b" strokeWidth="1.500"><path d="M1 10a9 9 0 0 1 17-2M18.500 3v5.500H13M10 22A9 9 0 0 1 1.500 17M1 21v-5h5.500" /><circle cx="15" cy="17" r="5" fill="red" stroke="none" /></svg>
      <svg viewBox="0 0 20 16" className="-mt-px ml-5 h-4 w-5 shrink-0" fill="none" stroke="#1b1b1b" strokeWidth="1.400"><rect x=".8" y=".8" width="18.400" height="14.400" rx="2" /><path d="M4 5h12M4 8h12" strokeDasharray="1.500 1.700" /><path d="M6 11.500h8" /></svg>
      <div className="-mt-px ml-[24px] text-center text-[15px] leading-[20px]">
        <T w={29}>ENG</T>
        <T w={15} className="mx-auto">IN</T>
      </div>
      <svg viewBox="0 0 20 16" className="-mt-px ml-[22px] h-4 w-5 shrink-0" fill="none" stroke="#1b1b1b" strokeWidth="1.500"><path d="M1 6q9-9 18 0M4 9q6-6 12 0M6.500 12q3.500-3.500 7 0" /><circle cx="10" cy="14" r="1.500" fill="#1b1b1b" stroke="none" /></svg>
      <svg viewBox="0 0 20 16" className="-mt-px ml-[10px] h-4 w-5 shrink-0" fill="none" stroke="#1b1b1b" strokeWidth="1.300"><path d="M1 5.500h3L8.500 1v14L4 10.500H1zM12.500 5l6 6M18.500 5l-6 6" /></svg>
      <svg viewBox="0 0 20 14" className="-mt-px ml-[10px] h-[14px] w-5 shrink-0" fill="none" stroke="#1b1b1b" strokeWidth="1.500"><rect x=".8" y="1" width="16" height="12" rx="2.500" /><path d="M3.800 4v6" /><path d="M18.500 4.500v5" strokeWidth="2.500" /></svg>
      <div className="-mt-[4px] ml-[20px] flex flex-col items-end text-[15px] leading-[20px]">
        <T w={62}>11:55 PM</T>
        <T w={61}>2/8/2025</T>
      </div>
      <svg viewBox="0 0 17 19" className="ml-[11px] h-[19px] w-[17px] shrink-0" fill="#0a4a9c"><path d="M8.500 0q6 0 6 6v5l2.500 5H0l2.500-5V6q0-6 6-6zM5.500 17h6q-1 2-3 2t-3-2z" /></svg>
    </div>
  );
}

export default function App() {
  return (
    <div className="flex h-[1080px] w-[1920px] flex-col overflow-hidden bg-white font-['Noto_Sans',sans-serif]">
      <Tabs />
      <div className="bg-[#d1e6f3]">
        <div className="h-[101px] rounded-t-[10px] bg-[#f6fafe]">
          <Toolbar />
          <Bookmarks />
        </div>
      </div>
      <AwsHeader />
      <Breadcrumbs />
      <div className="flex h-[741px] bg-white">
        <Sidebar />
        <main className="flex-1 pr-[18px] pl-[18px]">
          <div className="flex h-[57px] items-baseline pt-[8px] leading-[34px]">
            <T w={207} className="text-[26px] font-bold text-[#0f141a]">AWS Glue Studio</T>
            <Info className="ml-[9px] -translate-y-px" />
          </div>
          <CreateJob />
          <ExampleJobs />
          <YourJobs />
        </main>
      </div>
      <AwsFooter />
      <Taskbar />
    </div>
  );
}
